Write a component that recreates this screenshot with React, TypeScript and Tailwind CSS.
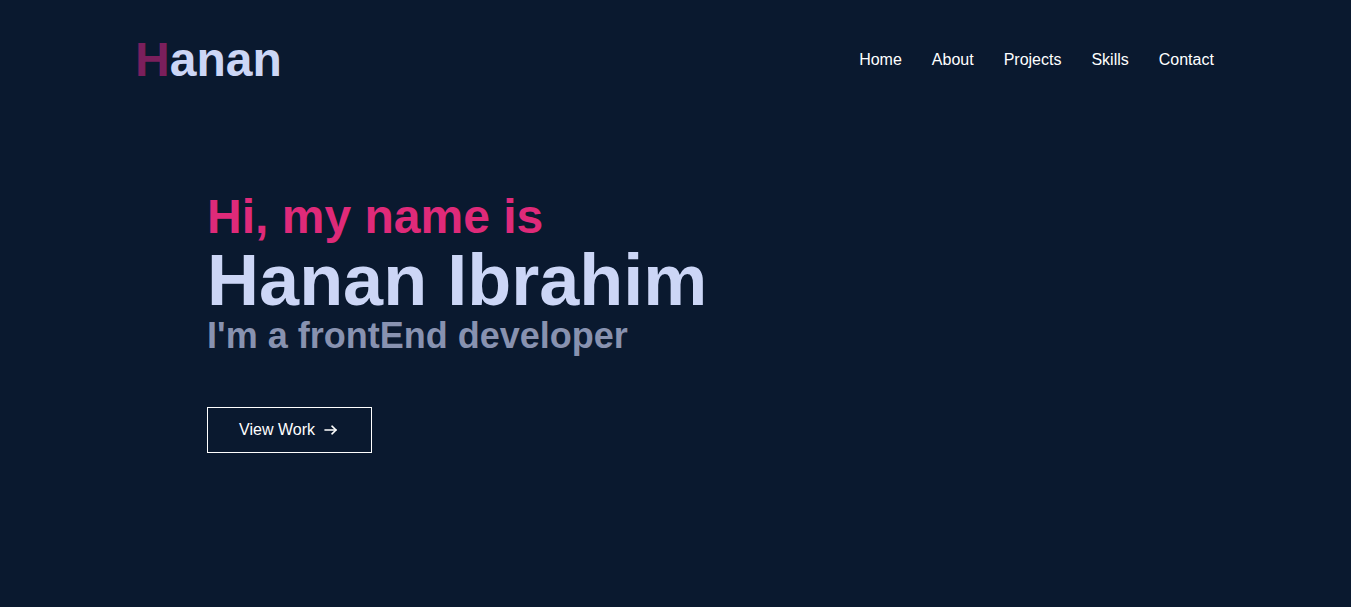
const links = ["Home", "About", "Projects", "Skills", "Contact"];

function ArrowIcon() {
  return (
    <svg width="13" height="10" viewBox="0 0 13 10" fill="none" stroke="currentColor" strokeWidth="1.6" strokeLinecap="round" strokeLinejoin="round">
      <path d="M1 5h11" />
      <path d="M8 1.2L12 5l-4 3.8" />
    </svg>
  );
}

export default function App() {
  return (
    <div
      className="min-h-[607px] bg-[#0a192f] px-[10%]"
      style={{ fontFamily: '"Liberation Sans", Arial, sans-serif' }}
    >
      {/* Header */}
      <header className="flex h-[120px] items-center justify-between">
        <a className="text-[48px] font-bold leading-none text-[#ccd6f6]">
          <span className="text-[#7b1f5c]">H</span>anan
        </a>
        <ul className="flex items-center gap-[30px] pr-[2px]">
          {links.map((l) => (
            <li key={l} className="text-[16px] leading-6 text-white">
              {l}
            </li>
          ))}
        </ul>
      </header>

      {/* Hero */}
      <section className="pl-[72px] pt-[73px]">
        <h3 className="text-[48px] font-bold leading-none text-[#df2a79]">
          Hi, my name is
        </h3>
        <h1 className="mt-[3px] text-[72px] font-bold leading-none text-[#ccd6f6]">
          Hanan Ibrahim
        </h1>
        <h2 className="mt-[2px] text-[36px] font-bold leading-none text-[#8892b0]">
          I'm a frontEnd developer
        </h2>
        <button className="mt-[53px] inline-flex items-center gap-[9px] border border-white py-[10px] pl-[31px] pr-[34px] text-[16px] leading-6 text-white">
          <span>View Work</span>
          <ArrowIcon />
        </button>
      </section>
    </div>
  );
}
